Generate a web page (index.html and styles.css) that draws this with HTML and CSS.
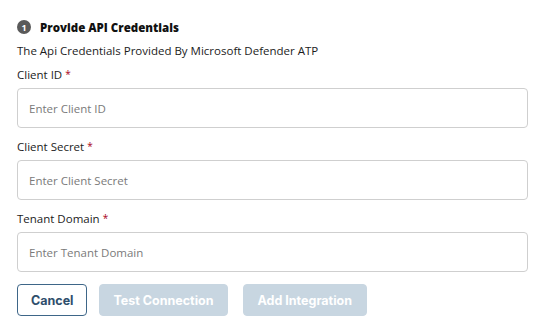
FILE: index.html
```html
<!DOCTYPE html>
<html>
<head>
<meta charset="utf-8">
<link rel="stylesheet" href="styles.css">
</head>
<body>
<div class="form">
  <div class="step">
    <span class="step-num">1</span>
    <span class="step-title">Provide API Credentials</span>
  </div>
  <p class="desc">The Api Credentials Provided By Microsoft Defender ATP</p>
  <div class="field">
    <label class="label">Client ID <span class="req">*</span></label>
    <input class="input" type="text" placeholder="Enter Client ID">
  </div>
  <div class="field">
    <label class="label">Client Secret <span class="req">*</span></label>
    <input class="input" type="text" placeholder="Enter Client Secret">
  </div>
  <div class="field">
    <label class="label">Tenant Domain <span class="req">*</span></label>
    <input class="input" type="text" placeholder="Enter Tenant Domain">
  </div>
  <div class="actions">
    <button class="btn btn-outline">Cancel</button>
    <button class="btn btn-disabled">Test Connection</button>
    <button class="btn btn-disabled btn-add">Add Integration</button>
  </div>
</div>
</body>
</html>
```

FILE: styles.css
```css
* { box-sizing: border-box; }
html, body { margin: 0; padding: 0; background: #fff; }
body {
  font-family: "Open Sans", "DejaVu Sans", sans-serif;
  color: #1c1c1c;
}
.form {
  width: 551px;
  padding: 20px 23px 0 17px;
  display: flex;
  flex-direction: column;
}
.step {
  display: flex;
  align-items: center;
  gap: 9px;
  height: 14px;
}
.step-num {
  width: 14px;
  height: 14px;
  border-radius: 50%;
  background: #5a5a5a;
  color: #fff;
  font-size: 9px;
  font-weight: 700;
  display: flex;
  align-items: center;
  justify-content: center;
}
.step-title {
  font-size: 11.5px;
  font-weight: 800;
  color: #111;
}
.desc {
  margin: 9px 0 0;
  font-size: 11.5px;
  line-height: 16px;
}
.field {
  display: flex;
  flex-direction: column;
  margin-top: 7px;
}
.field + .field { margin-top: 10px; }
.label {
  font-size: 11.5px;
  line-height: 16px;
  margin-bottom: 5px;
}
.req { color: #a8001a; font-size: 10px; vertical-align: 1px; }
.input {
  height: 40px;
  border: 1px solid #cfcfcf;
  border-radius: 4px;
  padding: 0 11px;
  font-family: inherit;
  font-size: 11.5px;
  color: #333;
  outline: none;
}
.input::placeholder { color: #7a7a7a; }
.actions {
  display: flex;
  gap: 12px;
  margin-top: 12px;
}
.btn {
  height: 32px;
  border-radius: 4px;
  font-family: "Inter", "Liberation Sans", sans-serif;
  font-size: 12.5px;
  font-weight: 700;
  padding: 0 13px;
}
.btn-outline {
  background: #fff;
  border: 1px solid #3e6688;
  color: #2e4e6c;
  padding: 0 13px;
}
.btn-disabled {
  background: #c8d6e1;
  border: 1px solid #c8d6e1;
  color: #fff;
}
.btn-add {
  margin-left: 3px;
  padding: 0 14px;
}
```
